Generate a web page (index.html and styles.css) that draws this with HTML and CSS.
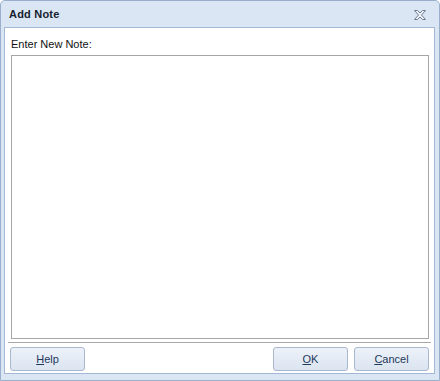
FILE: index.html
```html
<!DOCTYPE html>
<html lang="en">
<head>
  <meta charset="UTF-8" />
  <title>Add Note</title>
  <link rel="stylesheet" href="styles.css">
</head>
<body>

  <div class="window">
    <!-- Title bar -->
    <div class="titlebar">
      <span class="title">Add Note</span>
      <span class="close">
        <svg width="14" height="12" viewBox="0 0 14 12">
          <path d="M1.5 1.5 L4.5 1.5 L7 4 L9.5 1.5 L12.5 1.5 L8.5 6 L12.5 10.5 L9.5 10.5 L7 8 L4.5 10.5 L1.5 10.5 L5.5 6 Z" fill="#eef2f8" stroke="#6f7d90" stroke-width="1"/>
        </svg>
      </span>
    </div>

    <!-- Body -->
    <div class="panel">
      <label class="field-label" for="note">Enter New Note:</label>
      <textarea id="note" class="note"></textarea>
      <div class="separator"></div>
      <div class="buttons">
        <button class="btn"><u>H</u>elp</button>
        <div class="spacer"></div>
        <button class="btn"><u>O</u>K</button>
        <button class="btn"><u>C</u>ancel</button>
      </div>
    </div>
  </div>

</body>
</html>
```

FILE: styles.css
```css
body {
  margin: 0;
  font-family: "Liberation Sans", Arial, sans-serif;
  font-size: 11px;
  color: #000;
  background: #fff;
}

.window {
  width: 440px;
  height: 381px;
  box-sizing: border-box;
  border: 1px solid #99afcc;
  border-radius: 5px 5px 0 0;
  background: #dbe6f4;
  display: flex;
  flex-direction: column;
}

.titlebar {
  height: 26px;
  display: flex;
  align-items: center;
  padding: 0 12px 0 8px;
}

.title {
  font-weight: bold;
  font-size: 11px;
  letter-spacing: 0.2px;
  color: #15212e;
  flex: 1;
}

.close {
  display: flex;
  margin-top: 2px;
}

.panel {
  margin: 0 4px 6px 3px;
  flex: 1;
  background: #fff;
  border: 1px solid #a3b8d4;
  display: flex;
  flex-direction: column;
  padding: 10px 5px 2px 6px;
}

.field-label {
  line-height: 13px;
  color: #111;
  margin-bottom: 4px;
}

.note {
  flex: 1;
  margin: 0;
  resize: none;
  border: 1px solid #a6a6a6;
  background: #fff;
  outline: none;
}

.separator {
  height: 1px;
  background: #a9a9a9;
  margin: 3px -2px 4px -3px;
}

.buttons {
  display: flex;
  gap: 6px;
}

.spacer {
  flex: 1;
}

.btn {
  width: 75px;
  height: 24px;
  border: 1px solid #a9b8cc;
  border-radius: 3px;
  background: linear-gradient(#edf2f9, #dbe4f0);
  font-family: "Liberation Sans", Arial, sans-serif;
  font-size: 11px;
  color: #1e395b;
  padding: 0;
}

.btn:first-child {
  margin-left: -1px;
}
```
